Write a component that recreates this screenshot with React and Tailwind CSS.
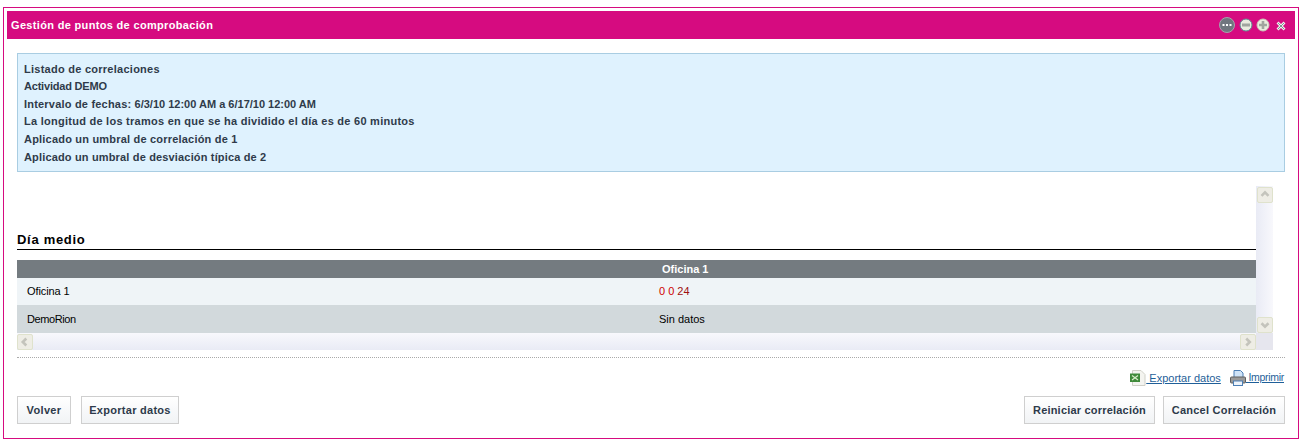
import React from 'react';

const font = { fontFamily: '"Liberation Sans", Arial, sans-serif' };

function ScrollButton({ dir }) {
  const paths = {
    up: 'M4 9 L8 5 L12 9',
    down: 'M4 6 L8 10 L12 6',
    left: 'M9.5 4 L5.5 8 L9.5 12',
    right: 'M6 4 L10 8 L6 12',
  };
  return (
    <div className="w-[16px] h-[16px] bg-[#eeede5] border border-[#dfe2cc] rounded-[2px] flex items-center justify-center shrink-0">
      <svg width="14" height="14" viewBox="0 0 16 16" fill="none" stroke="#c4c4bc" strokeWidth="3">
        <path d={paths[dir]} />
      </svg>
    </div>
  );
}

function WindowIcons() {
  return (
    <div className="flex items-center">
      <svg width="16" height="16" viewBox="0 0 16 16" className="mr-[4px]">
        <circle cx="8" cy="8" r="7.5" fill="#70767f" stroke="#a5a5ad" strokeWidth="1" />
        <rect x="3.5" y="7" width="2" height="2" fill="#fff" />
        <rect x="7" y="7" width="2" height="2" fill="#fff" />
        <rect x="10.5" y="7" width="2" height="2" fill="#fff" />
      </svg>
      <svg width="14" height="14" viewBox="0 0 14 14" className="mr-[3px]">
        <circle cx="7" cy="7" r="6" fill="#e9ecdf" stroke="#5d8d91" strokeWidth="1" />
        <rect x="3" y="5.5" width="8" height="3" fill="#a0a69f" />
      </svg>
      <svg width="14" height="14" viewBox="0 0 14 14" className="mr-[6px]">
        <circle cx="7" cy="7" r="6" fill="#e9ecdf" stroke="#c9c9b8" strokeWidth="1" />
        <path d="M7 3 V11 M3 7 H11" stroke="#a0a69f" strokeWidth="2.6" />
      </svg>
      <svg width="10" height="10" viewBox="0 0 10 10" className="mr-[4px] mt-[1px]">
        <path d="M1.5 1.5 L8.5 8.5 M8.5 1.5 L1.5 8.5" stroke="#eef2ee" strokeWidth="2.8" />
        <path d="M2 2 L8 8 M8 2 L2 8" stroke="#5f7a78" strokeWidth="0.8" />
      </svg>
    </div>
  );
}

function ExcelIcon() {
  return (
    <svg width="16" height="16" viewBox="0 0 16 16">
      <path d="M2.5 0.5 H11 L15 4.5 V15.5 H2.5 Z" fill="#f4f4f0" stroke="#d0d0c8" />
      <rect x="0" y="3.5" width="10" height="8.5" fill="#3f8a3a" />
      <path d="M2 5.5 L8 10 M8 5.5 L2 10" stroke="#d8ecc8" strokeWidth="1.2" />
    </svg>
  );
}

function PrinterIcon() {
  return (
    <svg width="16" height="16" viewBox="0 0 16 16">
      <path d="M4 0.5 H10.5 L13 3 V8 H4 Z" fill="#cfe3f7" stroke="#4d7fb5" />
      <rect x="0.5" y="7" width="15" height="6" rx="1" fill="#9a9a9a" stroke="#5f5f5f" />
      <rect x="3.5" y="11" width="9" height="4.5" fill="#eef4fb" stroke="#4d7fb5" />
    </svg>
  );
}

function ActionButton({ className, children }) {
  return (
    <button className={`h-[28px] bg-gradient-to-b from-white to-[#f1f3f5] border border-[#cfcfcf] text-[11px] font-bold text-[#2d3a4a] ${className}`}>
      {children}
    </button>
  );
}

export default function App() {
  return (
    <div className="w-[1304px] h-[446px] bg-white pt-[7px] pl-[3px] overflow-hidden" style={font}>
      <div className="w-[1296px] h-[432px] border border-[#d60b80] p-[3px]">
        <div className="h-[28px] bg-[#d60b80] flex items-center justify-between pl-[4px] pr-[5px]">
          <span className="text-[11px] font-bold text-white tracking-[0.33px]">Gestión de puntos de comprobación</span>
          <WindowIcons />
        </div>

        <div className="px-[10px] pt-[14px]">
          <div className="h-[119px] bg-[#dff2fe] border border-[#a9cde2] pl-[6px] pt-[6.6px] text-[11px] font-bold text-[#2f3b4a] whitespace-nowrap">
            <div className="h-[17.6px] leading-[17.6px] tracking-[0.26px]">Listado de correlaciones</div>
            <div className="h-[17.6px] leading-[17.6px] tracking-[-0.2px]">Actividad DEMO</div>
            <div className="h-[17.6px] leading-[17.6px] tracking-[0.2px]">Intervalo de fechas: <span className="tracking-normal">6/3/10 12:00 AM a 6/17/10 12:00 AM</span></div>
            <div className="h-[17.6px] leading-[17.6px] tracking-[0.26px]">La longitud de los tramos en que se ha dividido el día es de 60 minutos</div>
            <div className="h-[17.6px] leading-[17.6px] tracking-[0.2px]">Aplicado un umbral de correlación de 1</div>
            <div className="h-[17.6px] leading-[17.6px] tracking-[0.16px]">Aplicado un umbral de desviación típica de 2</div>
          </div>

          <div className="mt-[14px] w-[1256px] h-[164px] flex flex-col">
            <div className="flex h-[147px]">
              <div className="w-[1239px] flex flex-col">
                <div className="h-[64px] border-b border-black flex items-end text-[13px] font-bold text-black tracking-[0.7px] leading-[18px] shrink-0">
                  Día medio
                </div>
                <div className="mt-[10px] grid grid-cols-[628px_1fr] text-[11px] text-black">
                  <div className="h-[18px] bg-[#747b80] col-span-2 grid grid-cols-subgrid items-center text-white font-bold">
                    <span />
                    <span className="pl-[17px]">Oficina 1</span>
                  </div>
                  <div className="h-[27px] bg-[#eff4f7] col-span-2 grid grid-cols-subgrid items-center">
                    <span className="pl-[10px] tracking-[-0.1px]">Oficina 1</span>
                    <span className="pl-[14px]"><span className="text-[#d00000]">0 0 </span><span className="text-[#a01010]">24</span></span>
                  </div>
                  <div className="h-[28px] bg-[#d2d9dc] col-span-2 grid grid-cols-subgrid items-center">
                    <span className="pl-[10px] tracking-[-0.4px]">DemoRion</span>
                    <span className="pl-[14px]">Sin datos</span>
                  </div>
                </div>
              </div>
              <div className="w-[17px] pl-[1px] pt-[1px] bg-gradient-to-r from-[#e9ebf5] to-[#f8f8fc] flex flex-col justify-between">
                <ScrollButton dir="up" />
                <ScrollButton dir="down" />
              </div>
            </div>
            <div className="h-[17px] flex">
              <div className="w-[1239px] pt-[1px] bg-gradient-to-b from-[#f8f8fc] to-[#e9ebf5] flex justify-between">
                <ScrollButton dir="left" />
                <ScrollButton dir="right" />
              </div>
              <div className="w-[17px] bg-[#e6e6ee]" />
            </div>
          </div>

          <div className="mt-[7px] border-t border-dotted border-[#aaa]" />

          <div className="mt-[12px] pr-[1px] flex justify-end items-center gap-[9px] text-[#1f5f99] h-[16px]">
            <span className="flex items-center text-[11px]">
              <ExcelIcon />
              <span className="underline whitespace-pre"> Exportar datos</span>
            </span>
            <span className="flex items-center text-[10.5px] tracking-[-0.3px]">
              <PrinterIcon />
              <span className="underline whitespace-pre"> Imprimir</span>
            </span>
          </div>

          <div className="mt-[10px] flex justify-between">
            <div className="flex gap-[10px]">
              <ActionButton className="w-[54px] tracking-[0.35px]">Volver</ActionButton>
              <ActionButton className="w-[98px] tracking-[0.28px]">Exportar datos</ActionButton>
            </div>
            <div className="flex gap-[8px]">
              <ActionButton className="w-[131px] tracking-[0.2px]">Reiniciar correlación</ActionButton>
              <ActionButton className="w-[122px] tracking-[0.24px]">Cancel Correlación</ActionButton>
            </div>
          </div>
        </div>
      </div>
    </div>
  );
}
